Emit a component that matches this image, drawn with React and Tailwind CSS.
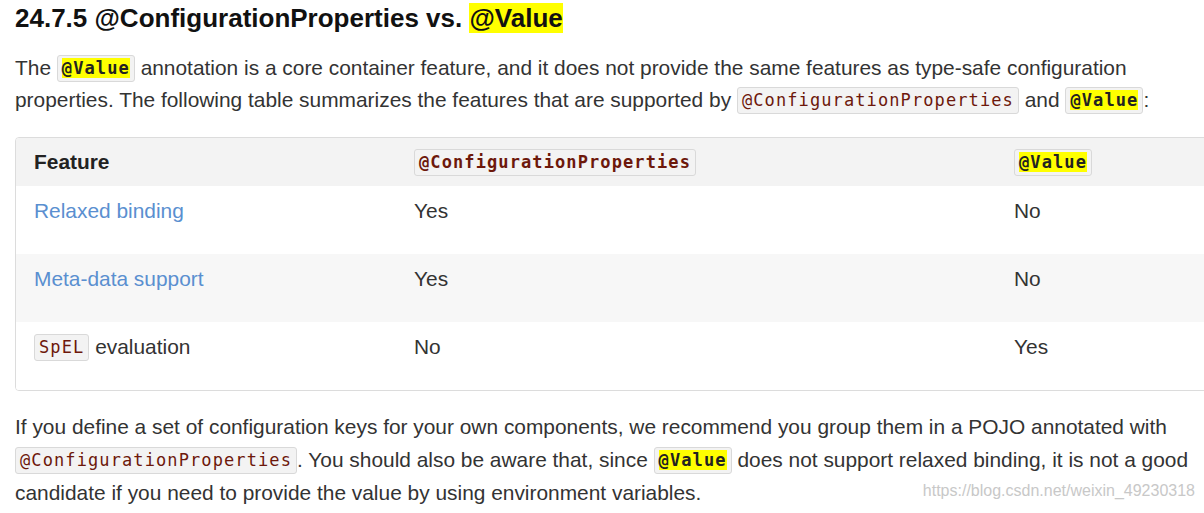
import React from 'react';

const Code = ({ children, hl, bold }) => (
  <code
    className={`inline-block rounded-[3px] border border-[#d9d9d9] bg-[#f3f3f3] px-[4px] leading-[25px] align-[1px] text-[17px] tracking-[1.1px] ${bold ? 'font-bold' : ''} ${hl ? 'text-[#222]' : 'text-[#6d180b]'}`}
    style={{ fontFamily: '"DejaVu Sans Mono", "Liberation Mono", monospace' }}
  >
    {hl ? <span className="bg-[#ffff00] font-bold">{children}</span> : children}
  </code>
);

const rows = [
  { feature: 'Relaxed binding', link: true, a: 'Yes', b: 'No', bg: 'bg-white' },
  { feature: 'Meta-data support', link: true, a: 'Yes', b: 'No', bg: 'bg-[#f7f7f7]' },
  { feature: 'evaluation', spel: true, a: 'No', b: 'Yes', bg: 'bg-white' },
];

export default function App() {
  return (
    <div
      className="relative h-[513px] w-[1204px] overflow-hidden bg-white pl-[15px] text-[#333]"
      style={{ fontFamily: '"Liberation Sans", Arial, sans-serif' }}
    >
      <h3 className="pt-[2px] text-[26px] font-bold leading-[32px] text-[#111]">
        24.7.5 @ConfigurationProperties vs. <span className="bg-[#ffff00]">@Value</span>
      </h3>

      <p className="mt-[18px] pr-[4px] text-[20.9px] leading-[32px]">
        The <Code hl>@Value</Code> annotation is a core container feature, and it does not provide the same features as type-safe configuration properties. The following table summarizes the features that are supported by <Code>@ConfigurationProperties</Code> and <Code hl>@Value</Code>:
      </p>

      <div className="mt-[21px] w-[1260px] overflow-hidden rounded-[4px] border border-[#dcdcdc] text-[20.9px]">
        <div className="grid h-[48px] grid-cols-[380px_600px_1fr] items-center bg-[#f3f3f3]">
          <div className="pl-[18px] font-bold text-[#222]">Feature</div>
          <div className="pl-[18px]"><Code bold>@ConfigurationProperties</Code></div>
          <div className="pl-[18px]"><Code hl>@Value</Code></div>
        </div>
        {rows.map((r) => (
          <div key={r.feature} className={`grid h-[68px] grid-cols-[380px_600px_1fr] pt-[12px] leading-[26px] ${r.bg}`}>
            <div className="pl-[18px]">
              {r.link ? (
                <span className="text-[#5a8fd0]">{r.feature}</span>
              ) : (
                <span>
                  <Code>SpEL</Code> {r.feature}
                </span>
              )}
            </div>
            <div className="pl-[18px]">{r.a}</div>
            <div className="pl-[18px]">{r.b}</div>
          </div>
        ))}
      </div>

      <p className="mt-[19px] pr-[2px] text-[20.9px] leading-[33px]">
        If you define a set of configuration keys for your own components, we recommend you group them in a POJO annotated with <Code>@ConfigurationProperties</Code>. You should also be aware that, since <Code hl>@Value</Code> does not support relaxed binding, it is not a good candidate if you need to provide the value by using environment variables.
      </p>

      <div className="absolute bottom-[10px] right-[9px] text-[16px] text-[#c8c8c8]">
        https://blog.csdn.net/weixin_49230318
      </div>
    </div>
  );
}
